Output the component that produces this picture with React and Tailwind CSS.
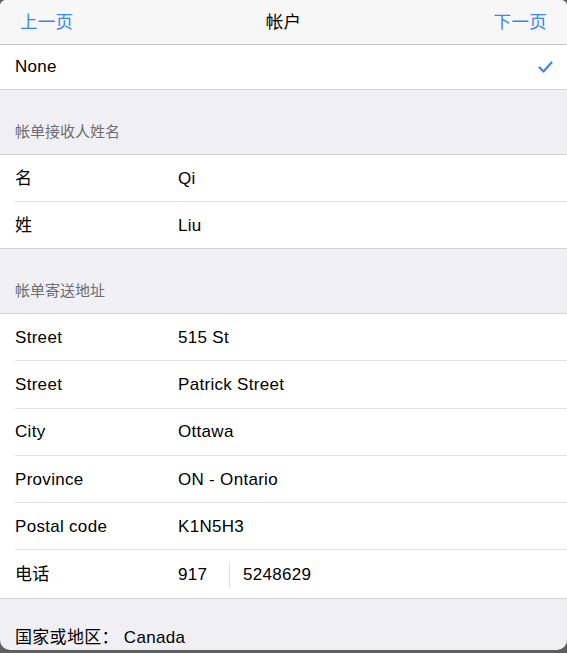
import React from 'react';

const font = { fontFamily: '"Liberation Sans", "Noto Sans CJK SC", sans-serif' };

function Row({ label, value, last, h = 'h-[47px]' }) {
  return (
    <div className={`flex ${h} pl-[15px]`}>
      <div className={`flex flex-1 items-center pt-[1px] ${last ? '' : 'border-b border-[#e0e0e3]'}`}>
        <span className="w-[163px]">{label}</span>
        <span>{value}</span>
      </div>
    </div>
  );
}

function SectionHeader({ title }) {
  return (
    <div className="h-[66px] flex items-end pb-[11px] pl-[15px] border-t border-b border-[#d4d4d8] bg-[#efeff4] text-[15px] text-[#6d6d72] tracking-normal">
      {title}
    </div>
  );
}

export default function App() {
  return (
    <div className="w-[567px] h-[653px] bg-[#5e5e5e] overflow-hidden" style={font}>
      <div className="h-[650px] bg-[#efeff4] rounded-b-[10px] rounded-t-[6px] overflow-hidden text-[17px] text-black tracking-[0.3px]">
        {/* nav bar */}
        <div className="h-[45px] bg-[#f7f7f7] border-b border-[#c8c8cc] flex items-center justify-between px-[20px] relative text-[17.5px]">
          <span className="text-[#3a85f7]">上一页</span>
          <span className="absolute left-0 right-0 text-center pointer-events-none">帐户</span>
          <span className="text-[#3a85f7]">下一页</span>
        </div>

        <div className="h-[44px] bg-white flex items-center justify-between pl-[15px] pr-[14px]">
          <span>None</span>
          <svg width="15" height="12" viewBox="0 0 15 12" fill="none">
            <path d="M1.5 6.5 L5.5 10.5 L13.5 1.5" stroke="#3a85f7" strokeWidth="2.2" strokeLinecap="round" strokeLinejoin="round" />
          </svg>
        </div>

        <SectionHeader title="帐单接收人姓名" />
        <div className="bg-white">
          <Row label="名" value="Qi" />
          <Row h="h-[46px]" label="姓" value="Liu" last />
        </div>

        <SectionHeader title="帐单寄送地址" />
        <div className="bg-white">
          <Row h="h-[47.3px]" label="Street" value="515 St" />
          <Row h="h-[47.3px]" label="Street" value="Patrick Street" />
          <Row h="h-[47.3px]" label="City" value="Ottawa" />
          <Row h="h-[47.3px]" label="Province" value="ON - Ontario" />
          <Row h="h-[47.3px]" label="Postal code" value="K1N5H3" />
          <div className="flex h-[47.3px] pl-[15px] pt-[1px] items-center">
            <span className="w-[163px]">电话</span>
            <div className="flex items-center h-full">
              <span className="w-[28px] text-right">917</span>
              <div className="mx-[23px] w-px h-[26px] bg-[#e0e0e3]" />
              <span className="-ml-[10px]">5248629</span>
            </div>
          </div>
        </div>

        <div className="border-t border-[#d4d4d8] pl-[15px] pt-[26px]">
          国家或地区： Canada
        </div>
      </div>
    </div>
  );
}
